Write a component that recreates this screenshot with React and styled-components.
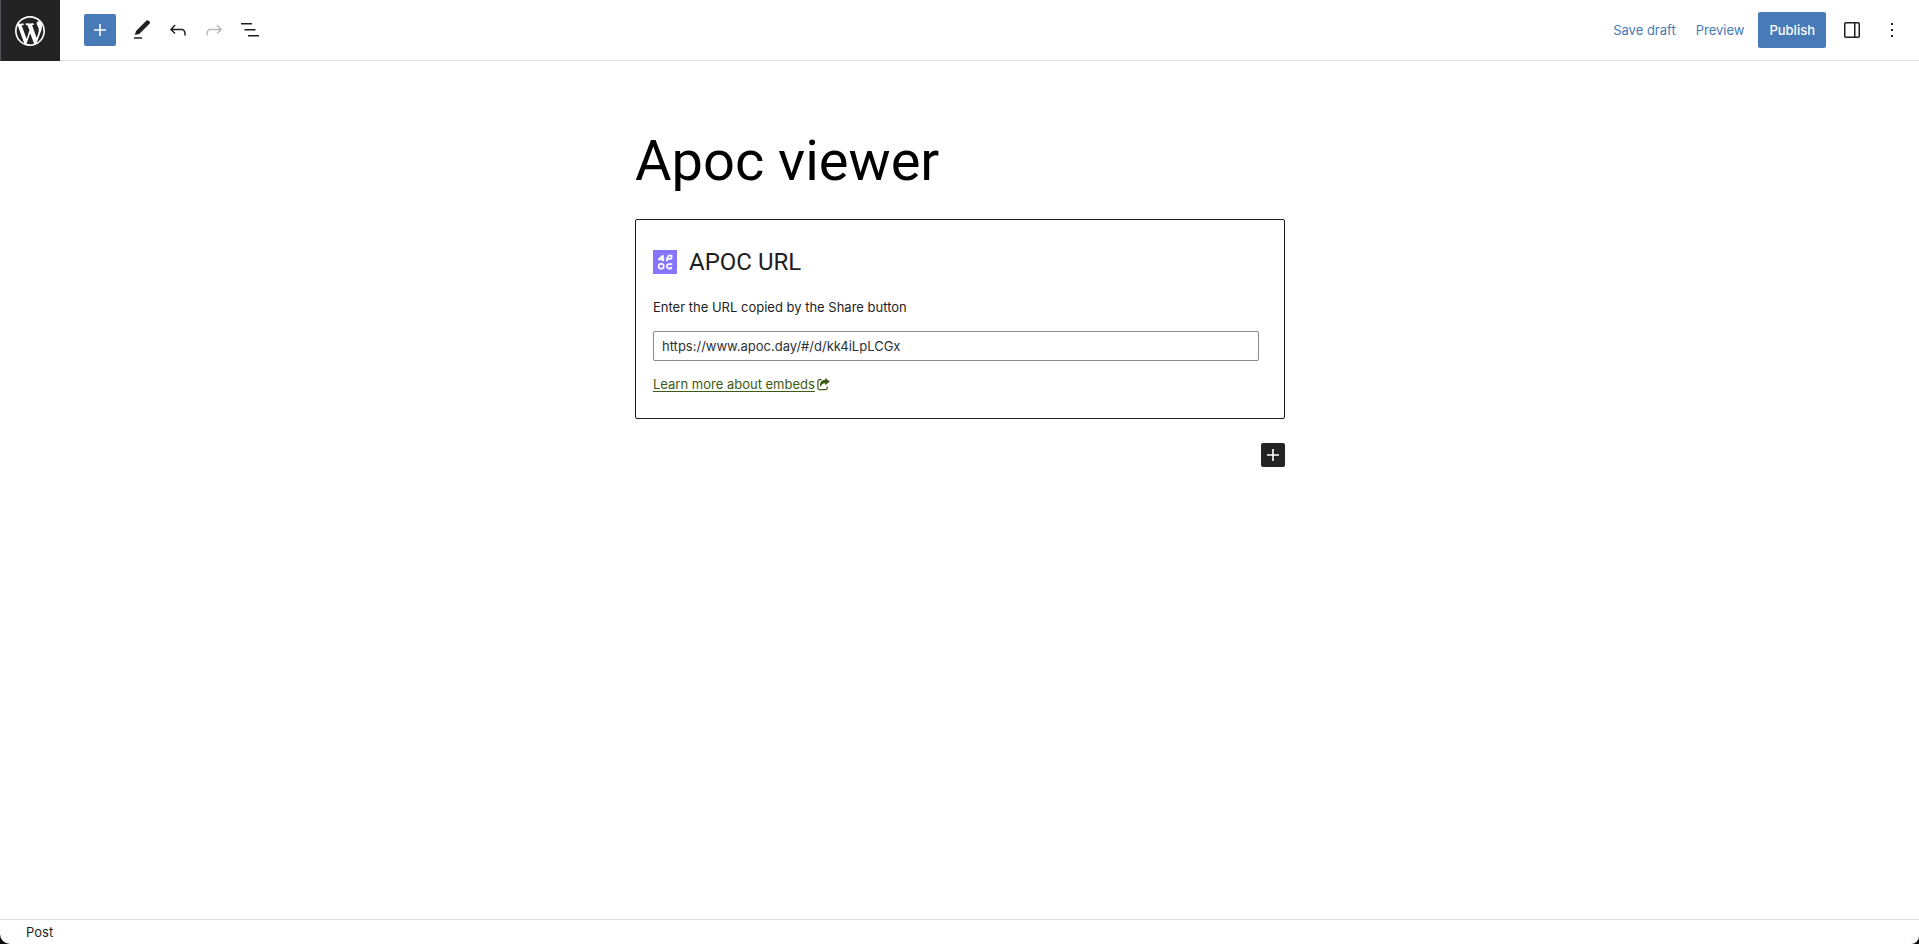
import React from "react";
import styled, { createGlobalStyle } from "styled-components";

const GlobalStyle = createGlobalStyle`
  *, *::before, *::after { box-sizing: border-box; }
  body {
    margin: 0;
    background: #0a0a0e;
    color: #1e1e1e;
    font-family: Inter, "Liberation Sans", sans-serif;
    font-size: 13px;
    line-height: 20px;
  }
  button, input { font: inherit; }
`;

const Editor = styled.div`
  display: flex;
  flex-direction: column;
  min-height: 100vh;
  background: #fff;
  border-radius: 0 0 8px 10px;
  overflow: hidden;
`;

const Header = styled.header`
  display: flex;
  align-items: center;
  justify-content: space-between;
  height: 61px;
  padding-right: 9px;
  border-bottom: 1px solid #e0e0e0;
`;

const HomeLink = styled.a`
  display: flex;
  align-items: center;
  justify-content: center;
  width: 60px;
  height: 61px;
  margin-right: 24px;
  margin-bottom: -1px;
  box-shadow: inset 1px 0 #50545a;
  background: #232323;
  color: #fff;
`;

const Tools = styled.div`
  display: flex;
  align-items: center;
  gap: ${(p) => p.$gap}px;
`;

const IconButton = styled.button`
  display: flex;
  align-items: center;
  justify-content: center;
  width: 36px;
  height: 36px;
  padding: 0;
  border: 0;
  border-radius: 2px;
  background: none;
  color: #1e1e1e;
  &:disabled { color: #bbb; }
`;

const InserterButton = styled(IconButton)`
  width: 32px;
  height: 32px;
  margin-right: 8px;
  background: #477ab7;
  color: #fff;
`;

const BlockAppender = styled(IconButton)`
  width: 24px;
  height: 24px;
  margin-top: 24px;
  background: #232323;
  color: #fff;
`;

const TextButton = styled.button`
  height: 36px;
  padding: 0 ${(p) => (p.$primary ? 11 : 6)}px;
  border: 0;
  border-radius: 2px;
  background: ${(p) => (p.$primary ? "#477ab7" : "transparent")};
  color: ${(p) => (p.$primary ? "#fff" : "#477ab7")};
  font-weight: ${(p) => (p.$primary ? 500 : 400)};
`;

const Canvas = styled.main`
  flex: 1;
  display: flex;
  flex-direction: column;
  align-items: flex-end;
  width: 100%;
  max-width: 651px;
  margin: 0 auto;
  padding: 64px 0 0 1px;
`;

const Title = styled.h1`
  width: 100%;
  margin: 0 0 22px;
  color: #000;
  font-family: Roboto, "Liberation Sans", sans-serif;
  font-size: 56px;
  font-weight: 400;
  line-height: 72px;
`;

const EmbedCard = styled.section`
  width: 100%;
  padding: 24px 25px 22px 17px;
  border: 1px solid #1e1e1e;
  border-radius: 2px;
`;

const CardTitle = styled.label`
  display: flex;
  align-items: center;
  gap: 12px;
  height: 36px;
  margin-bottom: 17px;
  font-family: Roboto, "Liberation Sans", sans-serif;
  font-size: 24px;
`;

const Instructions = styled.p`
  margin: 0 0 14px;
`;

const UrlInput = styled.input`
  display: block;
  width: 100%;
  height: 30px;
  margin-bottom: 13px;
  padding: 0 8px;
  border: 1px solid #8c8c8c;
  border-radius: 2px;
  background: #fff;
  color: #2c3338;
`;

const DocsLink = styled.a`
  display: flex;
  align-items: center;
  gap: 2px;
  width: fit-content;
  margin-bottom: 2px;
  color: #3c5a14;
  text-underline-offset: 2px;
`;

const Footer = styled.footer`
  height: 25px;
  padding: 2px 26px;
  border-top: 1px solid #ddd;
`;

const Icon = ({ d, size = 24, viewBox = "0 0 24 24" }) => (
  <svg width={size} height={size} viewBox={viewBox} fill="currentColor" aria-hidden="true">
    <path d={d} />
  </svg>
);

const paths = {
  wordpress:
    "M20 10c0-5.51-4.49-10-10-10C4.48 0 0 4.49 0 10c0 5.52 4.48 10 10 10 5.51 0 10-4.48 10-10zM7.78 15.37L4.37 6.22c.55-.02 1.17-.08 1.17-.08.5-.06.44-1.13-.06-1.11 0 0-1.45.11-2.37.11-.18 0-.37 0-.58-.01C4.12 2.69 6.87 1.11 10 1.11c2.33 0 4.45.87 6.05 2.34-.68-.11-1.65.39-1.65 1.58 0 .74.45 1.36.9 2.1.35.61.55 1.36.55 2.46 0 1.49-1.4 5-1.4 5l-3.03-8.37c.54-.02.82-.17.82-.17.5-.05.44-1.25-.06-1.22 0 0-1.44.12-2.38.12-.87 0-2.33-.12-2.33-.12-.5-.03-.56 1.2-.06 1.22l.92.08 1.26 3.41zM17.41 10c.24-.64.74-1.87.43-4.25.7 1.29 1.05 2.71 1.05 4.25 0 3.29-1.73 6.24-4.4 7.78.97-2.59 1.94-5.2 2.92-7.78zM6.1 18.09C3.12 16.65 1.11 13.53 1.11 10c0-1.3.23-2.48.72-3.59C3.25 10.3 4.67 14.2 6.1 18.09zm4.03-6.63l2.58 6.98c-.86.29-1.76.45-2.71.45-.79 0-1.57-.11-2.29-.33.81-2.38 1.62-4.74 2.42-7.1z",
  plus: "M18 11.2h-5.2V6h-1.6v5.2H6v1.6h5.2V18h1.6v-5.2H18z",
  edit: "M16.3 2.800C17 2 17.900 2 18.600 2.700L19.500 3.600C20.200 4.300 20.200 5.100 19.500 5.800L9.200 15.900L4.900 17L6 12.900L16.300 2.800zM4 20.8h8v-1.5H4v1.5z",
  undo: "M18.3 11.7c-.6-.6-1.4-.9-2.3-.9H6.7l2.9-3.3-1.1-1-4.5 5L8.5 16l1-1-2.7-2.7H16c.5 0 .9.2 1.3.5 1 1 1 3.4 1 4.5v.3h1.5v-.2c0-1.5 0-4.3-1.5-5.7z",
  redo: "M15.6 6.5l-1.1 1 2.9 3.3H8c-.9 0-1.7.3-2.3.9-1.4 1.5-1.4 4.2-1.4 5.6v.2h1.5v-.3c0-1.1 0-3.5 1-4.5.3-.3.7-.5 1.3-.5h9.2L14.5 15l1.1 1.1 4.6-4.6-4.6-5z",
  list: "M3 5h11v1.5H3V5zm3.5 6h11v1.5h-11V11zM21 17H10v1.5h11V17z",
  sidebar:
    "M18 4H6c-1.1 0-2 .9-2 2v12c0 1.1.9 2 2 2h12c1.1 0 2-.9 2-2V6c0-1.1-.9-2-2-2zm-4 14.5H6c-.3 0-.5-.2-.5-.5V6c0-.3.2-.5.5-.5h8v13zm4.5-.5c0 .3-.2.5-.5.5h-2.5v-13H18c.3 0 .5.2.5.5v12z",
  more: "M13 19h-2v-2h2v2zm0-6h-2v-2h2v2zm0-6h-2V5h2v2z",
};

const ApocLogo = () => (
  <svg width="24" height="24" viewBox="0 0 24 24" aria-hidden="true">
    <rect width="24" height="24" fill="#8575ff" />
    <g fill="none" stroke="#fff" strokeWidth="1.7" strokeLinejoin="round">
      <path d="M10 5.300L5.800 9.300H11.200M10 5.300V11.200" />
      <path d="M13.800 11.200V8.900H17.200A1.500 1.500 0 0 0 18.600 7.400V5.600H15.600L13.800 8.900" />
      <rect x="5.700" y="13.900" width="5" height="4.800" rx="2.200" />
      <path d="M19.200 14.200H16.100A2.200 2.200 0 0 0 16.100 18.600H18.100V16.800" />
    </g>
  </svg>
);

const ShareIcon = () => (
  <svg width="13" height="13" viewBox="0 0 13 13" aria-hidden="true">
    <path
      d="M4.600 1.600H2.600A1.700 1.700 0 0 0 .9 3.300V9.900A1.700 1.700 0 0 0 2.600 11.600H8.500A1.700 1.700 0 0 0 10.200 9.900V8.400"
      fill="none"
      stroke="currentColor"
      strokeWidth="1.2"
    />
    <path
      d="M8.300 0L12.800 3.600L8.300 7.200V5.200C6 5.200 4.400 6 3.700 9.200C1.800 5.200 4.300 1.800 8.300 1.700Z"
      fill="currentColor"
    />
  </svg>
);

export default function App() {
  return (
    <>
      <GlobalStyle />
      <Editor>
        <Header>
          <Tools $gap={0}>
            <HomeLink href="#posts" aria-label="View posts">
              <Icon d={paths.wordpress} size={36} viewBox="-2 -2 24 24" />
            </HomeLink>
            <InserterButton aria-label="Add block">
              <Icon d={paths.plus} />
            </InserterButton>
            <IconButton aria-label="Tools"><Icon d={paths.edit} /></IconButton>
            <IconButton aria-label="Undo"><Icon d={paths.undo} /></IconButton>
            <IconButton aria-label="Redo" disabled><Icon d={paths.redo} /></IconButton>
            <IconButton aria-label="List view"><Icon d={paths.list} /></IconButton>
          </Tools>
          <Tools $gap={8}>
            <TextButton>Save draft</TextButton>
            <TextButton>Preview</TextButton>
            <TextButton $primary>Publish</TextButton>
            <Tools $gap={4}>
              <IconButton aria-label="Settings"><Icon d={paths.sidebar} /></IconButton>
              <IconButton aria-label="Options"><Icon d={paths.more} /></IconButton>
            </Tools>
          </Tools>
        </Header>
        <Canvas>
          <Title>Apoc viewer</Title>
          <EmbedCard>
            <CardTitle htmlFor="apoc-url">
              <ApocLogo />
              APOC URL
            </CardTitle>
            <Instructions id="apoc-help">Enter the URL copied by the Share button</Instructions>
            <UrlInput
              id="apoc-url"
              type="url"
              aria-describedby="apoc-help"
              defaultValue="https://www.apoc.day/#/d/kk4iLpLCGx"
            />
            <DocsLink href="#embeds">
              Learn more about embeds
              <ShareIcon />
            </DocsLink>
          </EmbedCard>
          <BlockAppender aria-label="Add block">
            <Icon d={paths.plus} />
          </BlockAppender>
        </Canvas>
        <Footer>Post</Footer>
      </Editor>
    </>
  );
}
